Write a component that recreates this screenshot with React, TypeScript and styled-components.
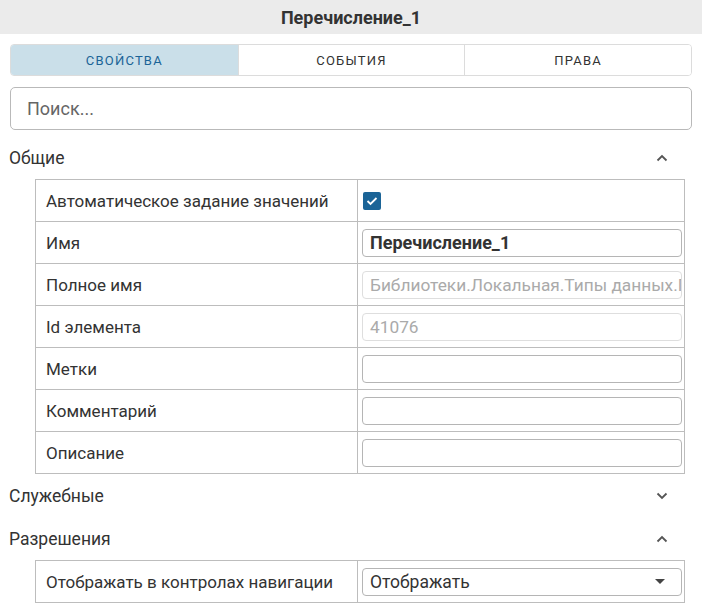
import React from 'react';
import styled, { createGlobalStyle } from 'styled-components';

const GlobalStyle = createGlobalStyle`
  html, body {
    margin: 0;
    padding: 0;
    background: #fff;
  }
  body {
    font-family: Roboto, 'Liberation Sans', sans-serif;
    color: #333;
  }
  * { box-sizing: border-box; }
`;

type Row = {
  label: string;
  kind: 'check' | 'input' | 'select';
  value?: string;
  bold?: boolean;
  disabled?: boolean;
};

const general: Row[] = [
  { label: 'Автоматическое задание значений', kind: 'check' },
  { label: 'Имя', kind: 'input', value: 'Перечисление_1', bold: true },
  { label: 'Полное имя', kind: 'input', value: 'Библиотеки.Локальная.Типы данных.Перечисление_1', disabled: true },
  { label: 'Id элемента', kind: 'input', value: '41076', disabled: true },
  { label: 'Метки', kind: 'input' },
  { label: 'Комментарий', kind: 'input' },
  { label: 'Описание', kind: 'input' },
];

const perms: Row[] = [
  { label: 'Отображать в контролах навигации', kind: 'select', value: 'Отображать' },
];

const tabs = ['Свойства', 'События', 'Права'];

const Page = styled.div`
  width: 702px;
  height: 611px;
  overflow: hidden;
`;

const Header = styled.div`
  height: 34px;
  background: #ebebeb;
  display: flex;
  align-items: center;
  justify-content: center;
  font-size: 18px;
  font-weight: 700;
  color: #333;
`;

const Body = styled.div`
  padding: 10px 10px 0 9px;
`;

const Tabs = styled.div`
  display: grid;
  grid-template-columns: repeat(3, 1fr);
  height: 32px;
  margin-left: 1px;
  border: 1px solid #dcdcdc;
  border-radius: 4px;
  overflow: hidden;
`;

const Tab = styled.div<{ $active?: boolean }>`
  display: flex;
  align-items: center;
  justify-content: center;
  font-size: 13px;
  letter-spacing: 1.2px;
  text-transform: uppercase;
  background: ${(p) => (p.$active ? '#cadfe9' : '#fff')};
  color: ${(p) => (p.$active ? '#1b6497' : '#333')};
  & + & {
    border-left: 1px solid #dcdcdc;
  }
`;

const Search = styled.div`
  margin: 11px 0 0 1px;
  height: 43px;
  border: 1px solid #b9b9b9;
  border-radius: 5px;
  display: flex;
  align-items: center;
  padding-left: 16px;
  font-size: 18px;
  color: #666;
`;

const Section = styled.div`
  display: flex;
  align-items: center;
  justify-content: space-between;
  height: 43px;
  padding-right: 24px;
  font-size: 17.5px;
  color: #333;
`;

const FirstSection = styled(Section)`
  margin-top: 6px;
`;

const Table = styled.div`
  margin-left: 26px;
  width: 650px;
  border: 1px solid #bdbdbd;
  border-bottom: none;
`;

const TableRow = styled.div`
  display: grid;
  grid-template-columns: 322px minmax(0, 1fr);
  height: 42px;
  border-bottom: 1px solid #bdbdbd;
`;

const Label = styled.div`
  display: flex;
  align-items: center;
  padding-left: 10px;
  font-size: 17px;
  color: #333;
  border-right: 1px solid #bdbdbd;
  white-space: nowrap;
`;

const Cell = styled.div`
  display: flex;
  align-items: center;
  min-width: 0;
  padding: 0 2px 0 4px;
`;

const Field = styled.div<{ $bold?: boolean; $disabled?: boolean }>`
  width: 100%;
  min-width: 0;
  height: 28px;
  border: 1px solid ${(p) => (p.$disabled ? '#dedede' : '#b5b5b5')};
  border-radius: 4px;
  display: flex;
  align-items: center;
  padding: 0 7px;
  font-size: ${(p) => (p.$bold ? '18px' : '17.3px')};
  font-weight: ${(p) => (p.$bold ? 700 : 400)};
  color: ${(p) => (p.$disabled ? '#aaa' : '#333')};
  white-space: nowrap;
  overflow: hidden;
`;

const SelectField = styled(Field)`
  justify-content: space-between;
  padding-right: 16px;
  font-size: 17.5px;
`;

const Check = styled.div`
  width: 18px;
  height: 18px;
  margin-left: 1px;
  border-radius: 2px;
  background: #1b6497;
  display: flex;
  align-items: center;
  justify-content: center;
`;

const Chevron = ({ up }: { up?: boolean }) => (
  <svg width="12" height="8" viewBox="0 0 12 8">
    <path
      d={up ? 'M1.5 6.5 L6 2 L10.5 6.5' : 'M1.5 1.5 L6 6 L10.5 1.5'}
      fill="none"
      stroke="#555"
      strokeWidth="1.8"
    />
  </svg>
);

const Caret = () => (
  <svg width="10" height="6" viewBox="0 0 10 6">
    <path d="M0 0 H10 L5 5 Z" fill="#444" />
  </svg>
);

const renderValue = (r: Row) => {
  if (r.kind === 'check') {
    return (
      <Check>
        <svg width="12" height="10" viewBox="0 0 12 10">
          <path d="M1.5 5 L4.5 8 L10.5 2" fill="none" stroke="#fff" strokeWidth="1.8" />
        </svg>
      </Check>
    );
  }
  if (r.kind === 'select') {
    return (
      <SelectField>
        <span>{r.value}</span>
        <Caret />
      </SelectField>
    );
  }
  return (
    <Field $bold={r.bold} $disabled={r.disabled}>
      {r.value}
    </Field>
  );
};

const PropTable = ({ rows }: { rows: Row[] }) => (
  <Table>
    {rows.map((r, i) => (
      <TableRow key={i}>
        <Label>{r.label}</Label>
        <Cell>{renderValue(r)}</Cell>
      </TableRow>
    ))}
  </Table>
);

export default function App() {
  return (
    <Page>
      <GlobalStyle />
      <Header>Перечисление_1</Header>
      <Body>
        <Tabs>
          {tabs.map((t, i) => (
            <Tab key={t} $active={i === 0}>
              {t}
            </Tab>
          ))}
        </Tabs>
        <Search>Поиск...</Search>
        <FirstSection>
          <span>Общие</span>
          <Chevron up />
        </FirstSection>
        <PropTable rows={general} />
        <Section>
          <span>Служебные</span>
          <Chevron />
        </Section>
        <Section>
          <span>Разрешения</span>
          <Chevron up />
        </Section>
        <PropTable rows={perms} />
      </Body>
    </Page>
  );
}
